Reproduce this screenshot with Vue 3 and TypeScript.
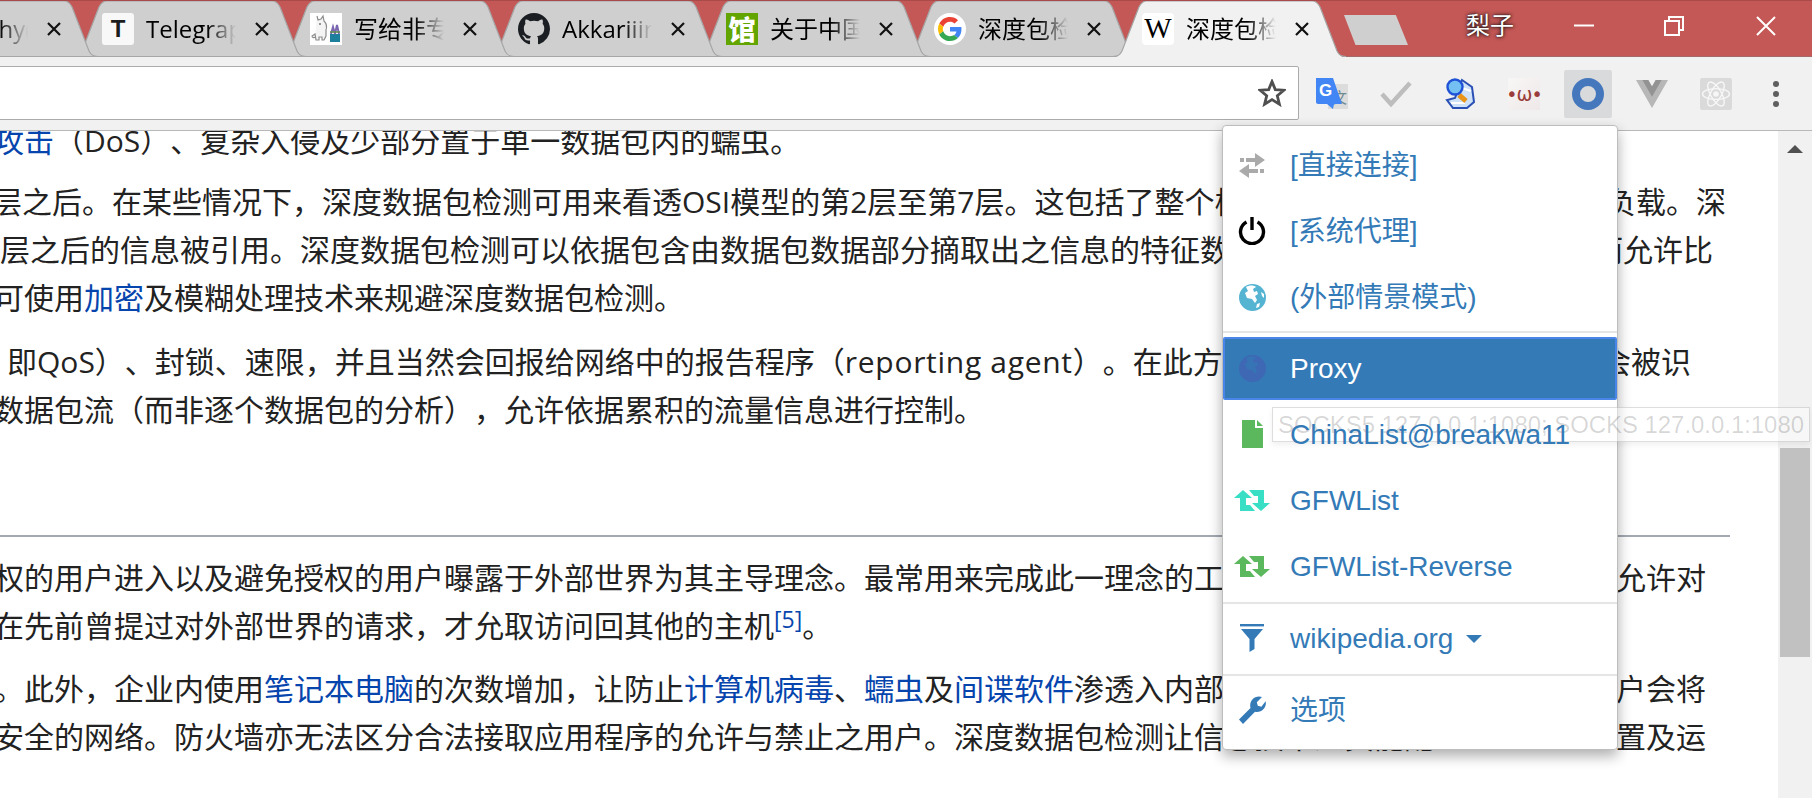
<script setup lang="ts">
interface Seg { t: string; link?: boolean; sup?: boolean; latin?: boolean }
interface Line { segs: Seg[]; right?: string; end?: number; indent?: number }
interface Para { top: number; lines: Line[] }
interface Tab { title: string; fav: string; active?: boolean }

const tabs: Tab[] = [
  { title: 'Morphy(', fav: 'none' },
  { title: 'Telegraph', fav: 'telegraph' },
  { title: '写给非专业人士', fav: 'moomin' },
  { title: 'Akkariiin', fav: 'github' },
  { title: '关于中国防火墙', fav: 'guan' },
  { title: '深度包检测', fav: 'google' },
  { title: '深度包检测', fav: 'wiki', active: true },
]

const paragraphs: Para[] = [
  { top: 0, lines: [
    { segs: [{ t: '攻击', link: true }, { t: '（DoS）、复杂入侵及少部分置于单一数据包内的蠕虫。' }] },
  ] },
  { top: 13, lines: [
    { indent: -8, segs: [{ t: '层之后。在某些情况下，深度数据包检测可用来看透OSI模型的第2层至第7层。这包括了整个栈头及应用层有效' }], right: '负载。深', end: 1726 },
    { indent: 0, segs: [{ t: '层之后的信息被引用。深度数据包检测可以依据包含由数据包数据部分摘取出之信息的特征数据库来分类从' }], right: '而允许比', end: 1713 },
    { segs: [{ t: '可使用' }, { t: '加密', link: true }, { t: '及模糊处理技术来规避深度数据包检测。' }] },
  ] },
  { top: 16, lines: [
    { indent: 7, segs: [{ t: '即QoS）、封锁、速限，并且当然会回报给网络中的报告程序（' }, { t: 'reporting agent', latin: true }, { t: '）。在此方面，数据包将' }], right: '会被识', end: 1691 },
    { segs: [{ t: '数据包流（而非逐个数据包的分析），允许依据累积的流量信息进行控制。' }] },
  ] },
]

const paragraphsAfter: Para[] = [
  { top: 17, lines: [
    { segs: [{ t: '权的用户进入以及避免授权的用户曝露于外部世界为其主导理念。最常用来完成此一理念的工具是防火墙，它' }], right: '允许对', end: 1706 },
    { segs: [{ t: '在先前曾提过对外部世界的请求，才允取访问回其他的主机' }, { t: '[5]', link: true, sup: true }, { t: '。' }] },
  ] },
  { top: 15, lines: [
    { segs: [{ t: '。此外，企业内使用' }, { t: '笔记本电脑', link: true }, { t: '的次数增加，让防止' }, { t: '计算机病毒', link: true }, { t: '、' }, { t: '蠕虫', link: true }, { t: '及' }, { t: '间谍软件', link: true }, { t: '渗透入内部网络更加困难，因为用' }], right: '户会将', end: 1706 },
    { segs: [{ t: '安全的网络。防火墙亦无法区分合法接取应用程序的允许与禁止之用户。深度数据包检测让信息技术人员能配' }], right: '置及运', end: 1706 },
  ] },
]

const lineStyle = (l: Line) => ({ paddingRight: l.end ? `${1778 - l.end}px` : undefined })
const leftStyle = (l: Line) => ({ marginLeft: `${l.indent ?? -6}px` })
const tabLayer = (i: number, t: Tab) => ({ zIndex: t.active ? 20 : 10 - i })
</script>

<template>
  <div class="window">
    <header class="strip">
      <div class="tabs">
        <div v-for="(t, i) in tabs" :key="i" class="tab" :class="{ active: t.active }" :style="tabLayer(i, t)">
          <svg class="tab-shape" viewBox="0 0 233 56" preserveAspectRatio="none">
            <path class="tab-fill" d="M0 56C5 56 7 54 9 50L26 6C28 2 30 0 34 0H199C203 0 205 2 207 6L224 50C226 54 228 56 233 56Z" />
            <path class="tab-edge" d="M0 55.5C5 55.5 7 54 9 50L26 6C28 2 30 0 34 0H199C203 0 205 2 207 6L224 50C226 54 228 55.5 233 55.5" />
            <path v-if="!t.active" class="tab-edge" d="M0 55.5H233" />
          </svg>
          <div class="fav" :class="t.fav">
            <span v-if="t.fav === 'telegraph'">T</span>
            <span v-else-if="t.fav === 'wiki'">W</span>
            <span v-else-if="t.fav === 'guan'">馆</span>
            <svg v-else-if="t.fav === 'github'" viewBox="0 0 16 16" width="32" height="32"><path fill="#1b1f23" d="M8 0C3.58 0 0 3.58 0 8c0 3.54 2.29 6.53 5.47 7.59.4.07.55-.17.55-.38 0-.19-.01-.82-.01-1.49-2.01.37-2.53-.49-2.69-.94-.09-.23-.48-.94-.82-1.13-.28-.15-.68-.52-.01-.53.63-.01 1.08.58 1.23.82.72 1.21 1.87.87 2.33.66.07-.52.28-.87.51-1.07-1.78-.2-3.64-.89-3.64-3.95 0-.87.31-1.59.82-2.15-.08-.2-.36-1.02.08-2.12 0 0 .67-.21 2.2.82.64-.18 1.32-.27 2-.27.68 0 1.36.09 2 .27 1.53-1.04 2.2-.82 2.2-.82.44 1.1.16 1.92.08 2.12.51.56.82 1.27.82 2.15 0 3.07-1.87 3.75-3.65 3.95.29.25.54.73.54 1.48 0 1.07-.01 1.93-.01 2.2 0 .21.15.46.55.38A8.013 8.013 0 0016 8c0-4.42-3.58-8-8-8z"/></svg>
            <svg v-else-if="t.fav === 'google'" viewBox="0 0 48 48" width="24" height="24">
              <path fill="#EA4335" d="M24 9.5c3.54 0 6.71 1.22 9.21 3.6l6.85-6.85C35.9 2.38 30.47 0 24 0 14.62 0 6.51 5.38 2.56 13.22l7.98 6.19C12.43 13.72 17.74 9.5 24 9.5z"/>
              <path fill="#4285F4" d="M46.98 24.55c0-1.57-.15-3.09-.38-4.55H24v9.02h12.94c-.58 2.96-2.26 5.48-4.78 7.18l7.73 6c4.51-4.18 7.09-10.36 7.09-17.65z"/>
              <path fill="#FBBC05" d="M10.53 28.59c-.48-1.45-.76-2.99-.76-4.59s.27-3.14.76-4.59l-7.98-6.19C.92 16.46 0 20.12 0 24c0 3.88.92 7.54 2.56 10.78l7.97-6.19z"/>
              <path fill="#34A853" d="M24 48c6.48 0 11.93-2.13 15.89-5.81l-7.73-6c-2.15 1.45-4.92 2.3-8.16 2.3-6.26 0-11.57-4.22-13.47-9.91l-7.98 6.19C6.51 42.62 14.62 48 24 48z"/>
            </svg>
            <svg v-else-if="t.fav === 'moomin'" viewBox="0 0 32 32" width="32" height="32">
              <path d="M7 3l1 4 3-1 2-3 1 5c3 3 3 6 2 9v6l-2 4h-2v-3H9v3H6l-1-6-3 2c0 2 3 2 3 1" fill="#f4f4f4" stroke="#8c8c8c" stroke-width="1.2"/>
              <circle cx="10" cy="11" r="1" fill="#777"/>
              <rect x="20" y="21" width="10" height="8" fill="#1c7f9c"/>
              <path d="M21 21l2-7 2 7M25 21l2-9 2 9" stroke="#7a66b0" stroke-width="2" fill="none"/>
              <path d="M20 19h10" stroke="#5b8f4a" stroke-width="1.5"/>
            </svg>
          </div>
          <span class="tab-title">{{ t.title }}</span>
          <svg class="tab-close" viewBox="0 0 16 16" width="16" height="16"><path d="M2 2L14 14M14 2L2 14" stroke="#111" stroke-width="2.2"/></svg>
        </div>
      </div>
      <div class="newtab"></div>
      <div class="profile">梨子</div>
      <div class="winctl">
        <div class="winbtn"><svg width="20" height="20" viewBox="0 0 20 20"><path d="M0 9.5H20" stroke="#fff" stroke-width="2"/></svg></div>
        <div class="winbtn"><svg width="20" height="20" viewBox="0 0 20 20"><path d="M5 4V1H19V14H15M1 5H15V19H1Z" stroke="#fff" stroke-width="2" fill="none"/></svg></div>
        <div class="winbtn last"><svg width="20" height="20" viewBox="0 0 20 20"><path d="M1 1L19 19M19 1L1 19" stroke="#fff" stroke-width="2"/></svg></div>
      </div>
    </header>

    <div class="toolbar">
      <div class="omnibox">
        <svg class="star" viewBox="0 0 28 28" width="28" height="28"><path d="M14 2.6L17.3 10.6 25.9 11.2 19.3 16.8 21.4 25.2 14 20.6 6.6 25.2 8.7 16.8 2.1 11.2 10.7 10.6Z" fill="none" stroke="#4f4f4f" stroke-width="2.8" stroke-linejoin="miter"/></svg>
      </div>
      <div class="action">
        <svg width="32" height="32" viewBox="0 0 32 32">
          <rect x="12" y="6" width="20" height="25" fill="#dcdcdc"/>
          <text x="16" y="25" class="wen">文</text>
          <path d="M0 0H17L26 26H18L17 31 11 26H2C1 26 0 25 0 24Z" fill="#4285f4"/>
          <text x="3" y="18" class="goo">G</text>
        </svg>
      </div>
      <div class="action">
        <svg width="32" height="26" viewBox="0 0 32 26"><path d="M2 13L11 23 30 2" fill="none" stroke="#bdbdbd" stroke-width="4.5"/></svg>
      </div>
      <div class="action">
        <svg width="30" height="32" viewBox="0 0 30 32">
          <path d="M17 2L27 9 29 24 22 30H8L2 22 10 20Z" fill="#cfe2f7" stroke="#2b50b5" stroke-width="2"/>
          <path d="M17 10L26 13M6 25H20" stroke="#fff" stroke-width="2"/>
          <path d="M14 17L21 23" stroke="#e8951a" stroke-width="5"/>
          <circle cx="10" cy="9" r="7.5" fill="#74c0f3" stroke="#1f52d6" stroke-width="2.4"/>
        </svg>
      </div>
      <div class="action">
        <div class="omega"><span>•ω•</span></div>
      </div>
      <div class="action lit">
        <svg width="32" height="32" viewBox="0 0 32 32"><circle cx="16" cy="16" r="12" fill="none" stroke="#4577bd" stroke-width="8"/></svg>
      </div>
      <div class="action">
        <svg width="32" height="28" viewBox="0 0 196 170"><path fill="#b7b7b7" d="M120.83 0L98 39.5 75.17 0H0l98 170L196 0z"/><path fill="#939393" d="M120.83 0L98 39.5 75.17 0H39.1L98 102.2 156.9 0z"/></svg>
      </div>
      <div class="action">
        <svg width="32" height="32" viewBox="0 0 32 32">
          <rect width="32" height="32" rx="2" fill="#dadada"/>
          <g fill="none" stroke="#f7f7f7" stroke-width="1.4">
            <ellipse cx="16" cy="16" rx="13.5" ry="5.4"/>
            <ellipse cx="16" cy="16" rx="13.5" ry="5.4" transform="rotate(60 16 16)"/>
            <ellipse cx="16" cy="16" rx="13.5" ry="5.4" transform="rotate(120 16 16)"/>
          </g>
          <circle cx="16" cy="16" r="2.8" fill="#f7f7f7"/>
        </svg>
      </div>
      <div class="dots"><i></i><i></i><i></i></div>
    </div>

    <main class="page">
      <article class="article">
        <div class="article-shift">
          <section v-for="(p, pi) in paragraphs" :key="pi" :style="{ marginTop: p.top + 'px' }">
            <div v-for="(l, li) in p.lines" :key="li" class="line" :style="lineStyle(l)">
              <span class="left" :style="leftStyle(l)"><template v-for="(s, si) in l.segs" :key="si"><sup v-if="s.sup" class="link">{{ s.t }}</sup><a v-else-if="s.link" class="link">{{ s.t }}</a><span v-else-if="s.latin" class="latin">{{ s.t }}</span><template v-else>{{ s.t }}</template></template></span>
              <span v-if="l.right" class="right">{{ l.right }}</span>
            </div>
          </section>
          <div class="rule"></div>
          <section v-for="(p, pi) in paragraphsAfter" :key="'b' + pi" :style="{ marginTop: p.top + 'px' }">
            <div v-for="(l, li) in p.lines" :key="li" class="line" :style="lineStyle(l)">
              <span class="left" :style="leftStyle(l)"><template v-for="(s, si) in l.segs" :key="si"><sup v-if="s.sup" class="link">{{ s.t }}</sup><a v-else-if="s.link" class="link">{{ s.t }}</a><span v-else-if="s.latin" class="latin">{{ s.t }}</span><template v-else>{{ s.t }}</template></template></span>
              <span v-if="l.right" class="right">{{ l.right }}</span>
            </div>
          </section>
        </div>
      </article>
      <aside class="scrollbar">
        <div class="arrow"></div>
        <div class="thumb"></div>
      </aside>
    </main>

    <nav class="menu">
      <div class="item">
        <span class="ico"><svg width="28" height="25" viewBox="0 0 28 25" fill="#aaa"><path d="M2 5h4v4H2zM8 5h9V0l10 7-10 7V9H8zM26 16h-4v4h4zM20 16h-9v-5L1 18l10 7v-5h9z"/></svg></span>
        <span class="cjk">[直接连接]</span>
      </div>
      <div class="item">
        <span class="ico"><svg width="28" height="28" viewBox="0 0 28 28"><path d="M8.5 5A11.5 11.5 0 1 0 19.5 5" fill="none" stroke="#000" stroke-width="3.4"/><path d="M14 0V13" stroke="#000" stroke-width="3.4"/></svg></span>
        <span class="cjk">[系统代理]</span>
      </div>
      <div class="item">
        <span class="ico"><svg width="27" height="27" viewBox="0 0 27 27"><circle cx="13.5" cy="13.5" r="13.5" fill="#56b4d3"/><path d="M7 3C10 1 15 1 17 3L14 5 15 8 18 7 19 10 16 12 18 16 16 19 13 15 8 14 6 9 9 7Z" fill="#fff"/><path d="M18 20l3-1-1 4-3 1zM22 8l3 2 0 4-2-2z" fill="#fff"/></svg></span>
        <span class="cjk">(外部情景模式)</span>
      </div>
      <div class="divider first"></div>
      <div class="item current">
        <span class="ico"><svg width="27" height="27" viewBox="0 0 27 27"><circle cx="13.5" cy="13.5" r="13.5" fill="#3f68b4"/><path d="M7 3C10 1 15 1 17 3L14 5 15 8 18 7 19 10 16 12 18 16 16 19 13 15 8 14 6 9 9 7Z" fill="#3674b6"/></svg></span>
        <span>Proxy</span>
      </div>
      <div class="item">
        <span class="ico"><svg width="21" height="28" viewBox="0 0 21 28"><path d="M0 0H13V8H21V28H0Z" fill="#5cb85c"/><path d="M15 0L21 6H15Z" fill="#5cb85c"/></svg></span>
        <span class="lat raised">ChinaList@breakwa11</span>
      </div>
      <div class="item">
        <span class="ico"><svg width="36" height="21" viewBox="0 0 36 21" fill="#38dfc4"><path d="M9 0L0 8H6V21H21L16 15H12V8H18Z"/><path d="M27 21L36 13H30V0H15L20 6H24V13H18Z"/></svg></span>
        <span class="lat">GFWList</span>
      </div>
      <div class="item">
        <span class="ico"><svg width="36" height="21" viewBox="0 0 36 21" fill="#5cb85c"><path d="M9 0L0 8H6V21H21L16 15H12V8H18Z"/><path d="M27 21L36 13H30V0H15L20 6H24V13H18Z"/></svg></span>
        <span class="lat">GFWList-Reverse</span>
      </div>
      <div class="divider"></div>
      <div class="item">
        <span class="ico"><svg width="24" height="28" viewBox="0 0 24 28" fill="#337ab7"><rect width="24" height="2.4"/><path d="M1 5H23L14.5 15V25L9.5 28V15Z"/></svg></span>
        <span class="lat">wikipedia.org</span>
        <i class="caret"></i>
      </div>
      <div class="divider"></div>
      <div class="item">
        <span class="ico"><svg width="28" height="28" viewBox="0 0 28 28" fill="#337ab7"><path d="M1 23.5L12.5 12C11 6 15 0.5 21 0.5C22 0.5 23 0.7 24 1L18.8 6.2 19.8 9.8 23.4 10.8 27.6 5.2C29 11.5 24 17 17 15.8L5 28Z"/></svg></span>
        <span class="cjk">选项</span>
      </div>
    </nav>

    <div class="tooltip">SOCKS5 127.0.0.1:1080; SOCKS 127.0.0.1:1080</div>
  </div>
</template>

<style>
html, body { margin: 0; padding: 0; background: #fff; }
</style>

<style scoped>
.window {
  position: relative;
  width: 1812px;
  height: 798px;
  overflow: hidden;
  display: flex;
  flex-direction: column;
  background: #fff;
  font-family: "Open Sans", "Noto Sans CJK SC", sans-serif;
  text-spacing-trim: space-all;
}
.strip {
  box-sizing: border-box;
  height: 57px;
  flex: none;
  display: flex;
  background: #c45856;
  border-top: 1px solid #a94b4a;
  border-bottom: 1px solid #a5696a;
}
.tabs { display: flex; margin-left: -135px; flex: none; height: 56px; }
.tab {
  position: relative;
  box-sizing: border-box;
  width: 233px;
  height: 56px;
  margin-right: -25px;
  padding-left: 29px;
  padding-bottom: 1px;
  display: flex;
  align-items: center;
  flex: none;
}
.tab-shape { position: absolute; left: 0; top: 0; width: 100%; height: 100%; }
.tab-fill { fill: #cfcfcf; }
.tab-edge { fill: none; stroke: #a6a6a6; stroke-width: 1.2; }
.active .tab-fill { fill: #f1f1f1; }
.fav {
  position: relative;
  flex: none;
  width: 32px;
  height: 32px;
  display: flex;
  align-items: center;
  justify-content: center;
  background: #fff;
}
.fav.none { background: transparent; }
.fav.github { background: transparent; }
.fav.telegraph {
  background: #f8f8f8;
  border-radius: 3px;
  font: 900 24px "Liberation Sans", sans-serif;
  color: #1c1c1c;
}
.fav.wiki {
  border-radius: 4px;
  font: 400 29px "Liberation Serif", serif;
  color: #000;
}
.fav.guan {
  background: #63a500;
  color: #fff;
  font: 900 27px "Noto Sans CJK SC", sans-serif;
}
.fav.google { border-radius: 50%; }
.tab-title {
  position: relative;
  flex: none;
  width: 90px;
  margin-left: 12px;
  overflow: hidden;
  white-space: nowrap;
  font-size: 24px;
  line-height: 34px;
  color: #000;
  -webkit-mask-image: linear-gradient(to right, #000 68%, transparent 100%);
  mask-image: linear-gradient(to right, #000 68%, transparent 100%);
}
.tab-close { position: relative; flex: none; margin-left: 18px; }
.newtab {
  flex: none;
  width: 64px;
  height: 30px;
  margin: 14px 0 0 23px;
  background: #cfcfcf;
  clip-path: polygon(0 0, 81% 0, 100% 100%, 18% 100%);
}
.profile {
  flex: none;
  margin: 6px 0 0 58px;
  height: 36px;
  line-height: 36px;
  font-size: 24px;
  color: #fff;
  text-shadow: 0 0 4px #000, 0 0 2px #333;
}
.winctl { display: flex; margin-left: 25px; flex: none; }
.winbtn {
  width: 90px;
  height: 50px;
  display: flex;
  align-items: center;
  justify-content: center;
}
.winbtn.last { width: 93px; justify-content: flex-start; padding-left: 37px; box-sizing: border-box; }

.toolbar {
  box-sizing: border-box;
  flex: none;
  height: 74px;
  background: #f1f1f1;
  border-bottom: 1px solid #b8b8b8;
  display: flex;
  align-items: center;
}
.omnibox {
  box-sizing: border-box;
  flex: none;
  width: 1301px;
  height: 54px;
  margin: -1px 0 0 -2px;
  background: #fff;
  border: 1px solid #ababab;
  border-radius: 2px;
  display: flex;
  align-items: center;
  justify-content: flex-end;
  padding-right: 12px;
}
.action {
  flex: none;
  box-sizing: border-box;
  width: 48px;
  height: 48px;
  margin-left: 16px;
  display: flex;
  align-items: center;
  justify-content: center;
}
.omnibox + .action { margin-left: 9px; }
.action.lit { background: #d9dadc; border-radius: 2px; }
.wen { font: 400 15px "Noto Sans CJK SC", sans-serif; fill: #6f8a92; }
.goo { font: 700 17px "Liberation Sans", sans-serif; fill: #fff; }
.omega {
  width: 32px;
  height: 32px;
  background: linear-gradient(135deg, #f8f6f6, #efe8e8);
  display: flex;
  align-items: center;
  justify-content: center;
  color: #9a3d3a;
  font: 400 19px "DejaVu Sans", sans-serif;
  letter-spacing: -1px;
  white-space: nowrap;
}
.dots {
  flex: none;
  margin-left: 33px;
  display: flex;
  flex-direction: column;
  gap: 4px;
}
.dots i { display: block; width: 6px; height: 6px; border-radius: 50%; background: #5f5f5f; }

.page { flex: 1; min-height: 0; display: flex; }
.article { flex: 1; min-width: 0; overflow: hidden; }
.article-shift { margin-top: -14px; }
.line {
  display: flex;
  height: 48px;
  line-height: 48px;
  font-size: 30px;
  color: #222;
  white-space: nowrap;
}
.left { flex: 1 1 0; min-width: 0; overflow: hidden; }
.right { flex: none; }
.link { color: #0645ad; }
.latin { letter-spacing: 0.7px; }
sup.link { font-size: 23px; line-height: 0; vertical-align: 9px; }
.rule { height: 2px; margin: 101px 48px 0 0; background: #a2a9b1; }
.scrollbar { flex: none; width: 34px; background: #f1f1f1; }
.arrow {
  width: 0;
  height: 0;
  margin: 14px 0 0 9px;
  border-left: 8px solid transparent;
  border-right: 8px solid transparent;
  border-bottom: 8px solid #505050;
}
.thumb { height: 209px; margin: 295px 2px 0 2px; background: #c1c1c1; }

.menu {
  position: absolute;
  left: 1222px;
  top: 125px;
  box-sizing: border-box;
  width: 396px;
  padding: 6px 0;
  background: #fff;
  border: 1px solid #bdbdbd;
  border-radius: 4px;
  box-shadow: 0 6px 14px rgba(0, 0, 0, 0.32);
  font: 400 28px "Liberation Sans", "Noto Sans CJK SC", sans-serif;
  color: #337ab7;
}
.item {
  height: 66px;
  display: flex;
  align-items: center;
  padding-left: 11px;
  white-space: nowrap;
}
.ico {
  flex: none;
  width: 36px;
  margin-right: 21px;
  display: flex;
  justify-content: center;
}
.ico svg { display: block; }
.cjk { margin-left: -1px; padding-bottom: 4px; }
.lat { margin-left: -1px; padding-top: 2px; }
.raised { position: relative; z-index: 2; }
.divider { height: 2px; margin: 3px 0 1px; background: #e5e5e5; }
.divider.first { margin: 1px 0 4px; }
.item.current {
  box-sizing: border-box;
  height: 63px;
  margin-bottom: 1px;
  padding-left: 9px;
  color: #fff;
  background: #337ab7;
  border: 2px solid #4a86e8;
  border-radius: 2px;
}
.current .ico + span { margin-left: -1px; }
.caret {
  display: block;
  margin: 2px 0 0 13px;
  border-left: 8px solid transparent;
  border-right: 8px solid transparent;
  border-top: 8px solid #337ab7;
}
.tooltip {
  position: absolute;
  z-index: 1;
  left: 1272px;
  top: 407px;
  box-sizing: border-box;
  width: 538px;
  height: 35px;
  padding-left: 5px;
  font: 400 23.9px/33px "Liberation Sans", sans-serif;
  color: rgba(0, 0, 0, 0.16);
  background: rgba(255, 255, 255, 0.45);
  border: 1px solid rgba(0, 0, 0, 0.13);
  box-shadow: 0 3px 6px rgba(0, 0, 0, 0.06);
  white-space: nowrap;
  pointer-events: none;
}
</style>
